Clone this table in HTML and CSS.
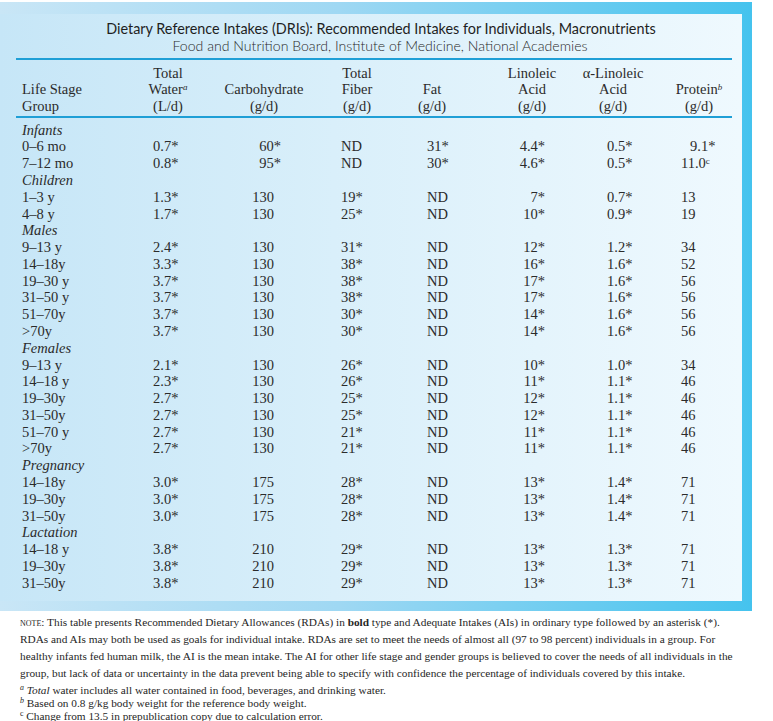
FILE: index.html
```html
<!DOCTYPE html>
<html lang="en">
<head>
<meta charset="utf-8">
<title>Dietary Reference Intakes: Macronutrients</title>
<link rel="stylesheet" href="styles.css">
</head>
<body>
<div class="frame">
  <div class="panel">
    <div class="title">Dietary Reference Intakes (DRIs): Recommended Intakes for Individuals, Macronutrients</div>
    <div class="subtitle">Food and Nutrition Board, Institute of Medicine, National Academies</div>
    <div class="rule rule1"></div>
    <div class="grid thead">
      <div class="h c1"><br>Life Stage<br>Group</div>
      <div class="h c2">Total<br>Water<sup><i>a</i></sup><br>(L/d)</div>
      <div class="h c3"><br>Carbohydrate<br>(g/d)</div>
      <div class="h c4">Total<br>Fiber<br>(g/d)</div>
      <div class="h c5"><br>Fat<br>(g/d)</div>
      <div class="h c6">Linoleic<br>Acid<br>(g/d)</div>
      <div class="h c7">α-Linoleic<br>Acid<br>(g/d)</div>
      <div class="h c8"><br>Protein<sup><i>b</i></sup><br>(g/d)</div>
    </div>
    <div class="rule rule2"></div>
    <div class="grid tbody">
      <div class="grp">Infants</div>
      <div class="c1">0–6 mo</div><div class="c2">0.7*</div><div class="c3">60<span class="hang">*</span></div><div class="c4">ND</div><div class="c5">31*</div><div class="c6">4.4*</div><div class="c7">0.5*</div><div class="c8 shift">9.1*</div>
      <div class="c1">7–12 mo</div><div class="c2">0.8*</div><div class="c3">95<span class="hang">*</span></div><div class="c4">ND</div><div class="c5">30*</div><div class="c6">4.6*</div><div class="c7">0.5*</div><div class="c8">11.0<sup>c</sup></div>
      <div class="grp">Children</div>
      <div class="c1">1–3 y</div><div class="c2">1.3*</div><div class="c3">130</div><div class="c4">19*</div><div class="c5">ND</div><div class="c6">7*</div><div class="c7">0.7*</div><div class="c8">13</div>
      <div class="c1">4–8 y</div><div class="c2">1.7*</div><div class="c3">130</div><div class="c4">25*</div><div class="c5">ND</div><div class="c6">10*</div><div class="c7">0.9*</div><div class="c8">19</div>
      <div class="grp">Males</div>
      <div class="c1">9–13 y</div><div class="c2">2.4*</div><div class="c3">130</div><div class="c4">31*</div><div class="c5">ND</div><div class="c6">12*</div><div class="c7">1.2*</div><div class="c8">34</div>
      <div class="c1">14–18y</div><div class="c2">3.3*</div><div class="c3">130</div><div class="c4">38*</div><div class="c5">ND</div><div class="c6">16*</div><div class="c7">1.6*</div><div class="c8">52</div>
      <div class="c1">19–30 y</div><div class="c2">3.7*</div><div class="c3">130</div><div class="c4">38*</div><div class="c5">ND</div><div class="c6">17*</div><div class="c7">1.6*</div><div class="c8">56</div>
      <div class="c1">31–50 y</div><div class="c2">3.7*</div><div class="c3">130</div><div class="c4">38*</div><div class="c5">ND</div><div class="c6">17*</div><div class="c7">1.6*</div><div class="c8">56</div>
      <div class="c1">51–70y</div><div class="c2">3.7*</div><div class="c3">130</div><div class="c4">30*</div><div class="c5">ND</div><div class="c6">14*</div><div class="c7">1.6*</div><div class="c8">56</div>
      <div class="c1">&gt;70y</div><div class="c2">3.7*</div><div class="c3">130</div><div class="c4">30*</div><div class="c5">ND</div><div class="c6">14*</div><div class="c7">1.6*</div><div class="c8">56</div>
      <div class="grp">Females</div>
      <div class="c1">9–13 y</div><div class="c2">2.1*</div><div class="c3">130</div><div class="c4">26*</div><div class="c5">ND</div><div class="c6">10*</div><div class="c7">1.0*</div><div class="c8">34</div>
      <div class="c1">14–18 y</div><div class="c2">2.3*</div><div class="c3">130</div><div class="c4">26*</div><div class="c5">ND</div><div class="c6">11*</div><div class="c7">1.1*</div><div class="c8">46</div>
      <div class="c1">19–30y</div><div class="c2">2.7*</div><div class="c3">130</div><div class="c4">25*</div><div class="c5">ND</div><div class="c6">12*</div><div class="c7">1.1*</div><div class="c8">46</div>
      <div class="c1">31–50y</div><div class="c2">2.7*</div><div class="c3">130</div><div class="c4">25*</div><div class="c5">ND</div><div class="c6">12*</div><div class="c7">1.1*</div><div class="c8">46</div>
      <div class="c1">51–70 y</div><div class="c2">2.7*</div><div class="c3">130</div><div class="c4">21*</div><div class="c5">ND</div><div class="c6">11*</div><div class="c7">1.1*</div><div class="c8">46</div>
      <div class="c1">&gt;70y</div><div class="c2">2.7*</div><div class="c3">130</div><div class="c4">21*</div><div class="c5">ND</div><div class="c6">11*</div><div class="c7">1.1*</div><div class="c8">46</div>
      <div class="grp">Pregnancy</div>
      <div class="c1">14–18y</div><div class="c2">3.0*</div><div class="c3">175</div><div class="c4">28*</div><div class="c5">ND</div><div class="c6">13*</div><div class="c7">1.4*</div><div class="c8">71</div>
      <div class="c1">19–30y</div><div class="c2">3.0*</div><div class="c3">175</div><div class="c4">28*</div><div class="c5">ND</div><div class="c6">13*</div><div class="c7">1.4*</div><div class="c8">71</div>
      <div class="c1">31–50y</div><div class="c2">3.0*</div><div class="c3">175</div><div class="c4">28*</div><div class="c5">ND</div><div class="c6">13*</div><div class="c7">1.4*</div><div class="c8">71</div>
      <div class="grp">Lactation</div>
      <div class="c1">14–18 y</div><div class="c2">3.8*</div><div class="c3">210</div><div class="c4">29*</div><div class="c5">ND</div><div class="c6">13*</div><div class="c7">1.3*</div><div class="c8">71</div>
      <div class="c1">19–30y</div><div class="c2">3.8*</div><div class="c3">210</div><div class="c4">29*</div><div class="c5">ND</div><div class="c6">13*</div><div class="c7">1.3*</div><div class="c8">71</div>
      <div class="c1">31–50y</div><div class="c2">3.8*</div><div class="c3">210</div><div class="c4">29*</div><div class="c5">ND</div><div class="c6">13*</div><div class="c7">1.3*</div><div class="c8">71</div>
    </div>
  </div>
</div>
<div class="notes">
  <p class="note"><span class="sc">Note</span>: This table presents Recommended Dietary Allowances (RDAs) in <b>bold</b> type and Adequate Intakes (AIs) in ordinary type followed by an asterisk (*).<br>RDAs and AIs may both be used as goals for individual intake. RDAs are set to meet the needs of almost all (97 to 98 percent) individuals in a group. For<br>healthy infants fed human milk, the AI is the mean intake. The AI for other life stage and gender groups is believed to cover the needs of all individuals in the<br>group, but lack of data or uncertainty in the data prevent being able to specify with confidence the percentage of individuals covered by this intake.</p>
  <p class="fn"><sup><i>a</i></sup> <i>Total</i> water includes all water contained in food, beverages, and drinking water.</p>
  <p class="fn"><sup><i>b</i></sup> Based on 0.8 g/kg body weight for the reference body weight.</p>
  <p class="fn"><sup>c</sup> Change from 13.5 in prepublication copy due to calculation error.</p>
</div>
</body>
</html>
```
FILE: styles.css
```css
html, body {
  margin: 0;
  padding: 0;
  background: #ffffff;
}
body {
  font-family: "Liberation Serif", "Times New Roman", serif;
  color: #2b2b2b;
}
.frame {
  width: 742px;
  margin-top: 2px;
  padding: 12px 10px 10px 0;
  background: linear-gradient(to right, #c9e6f6 0%, #9fd8f3 45%, #45c3ee 100%);
}
.panel {
  padding: 5.5px 10px 9.6px 16px;
  background: linear-gradient(to right, #c6e6f7 0%, #d9effa 45%, #eff9fe 100%);
}
.title {
  font-family: Lato, "Liberation Sans", sans-serif;
  font-size: 14.4px;
  line-height: 17px;
  text-align: center;
  padding-left: 14px;
  color: #1f1f1f;
}
.subtitle {
  font-family: Lato, "Liberation Sans", sans-serif;
  font-weight: 300;
  font-size: 14.1px;
  line-height: 17px;
  text-align: center;
  padding-left: 12px;
  color: #2a2a2a;
}
.rule {
  height: 2px;
  background: #1f9fd6;
}
.rule1 { margin-top: 4.5px; }
.rule2 { margin-top: 1.75px; }
.grid {
  display: grid;
  grid-template-columns: 104px 94px 94px 84px 78px 102px 80px 80px;
  font-size: 14.5px;
}
.thead {
  margin-top: 4.75px;
  line-height: 16.5px;
}
.tbody {
  margin-top: 3.6px;
  line-height: 16.78px;
}
sup {
  font-size: 0.62em;
  line-height: 0;
  vertical-align: 0.5em;
}
.h { text-align: center; }
.h.c1 { text-align: left; padding-left: 6px; }
.h.c2 { padding-left: 2px; }
.h.c3 { padding-left: 6px; }
.h.c4 { padding-left: 14px; }
.h.c5 { padding-left: 2px; }
.h.c6 { padding-left: 22px; }
.h.c7 { padding-left: 2px; }
.h.c8 { padding-left: 14px; }

.tbody .c1 { padding-left: 6px; white-space: nowrap; }
.tbody .c2 { padding-left: 33px; }
.tbody .c3 { text-align: right; padding-right: 34px; }
.tbody .c4 { padding-left: 33px; }
.tbody .c5 { padding-left: 35px; }
.tbody .c6 { text-align: right; padding-right: 27px; }
.tbody .c7 { padding-left: 35px; }
.tbody .c8 { padding-left: 29px; }
.tbody .c8.shift { padding-left: 38px; }
.hang { margin-right: -7px; }
.grp {
  grid-column: 1 / -1;
  padding-left: 6px;
  font-style: italic;
}
.notes {
  padding-left: 20px;
  font-size: 11.3px;
  color: #262626;
}
.notes p { margin: 0; }
.note {
  line-height: 17px;
  margin-top: 2.5px !important;
}
.sc {
  font-variant: small-caps;
  text-transform: lowercase;
}
.fn { line-height: 13px; }
.fn sup { font-size: 0.7em; }
.note + .fn { margin-top: 2px !important; }
```
